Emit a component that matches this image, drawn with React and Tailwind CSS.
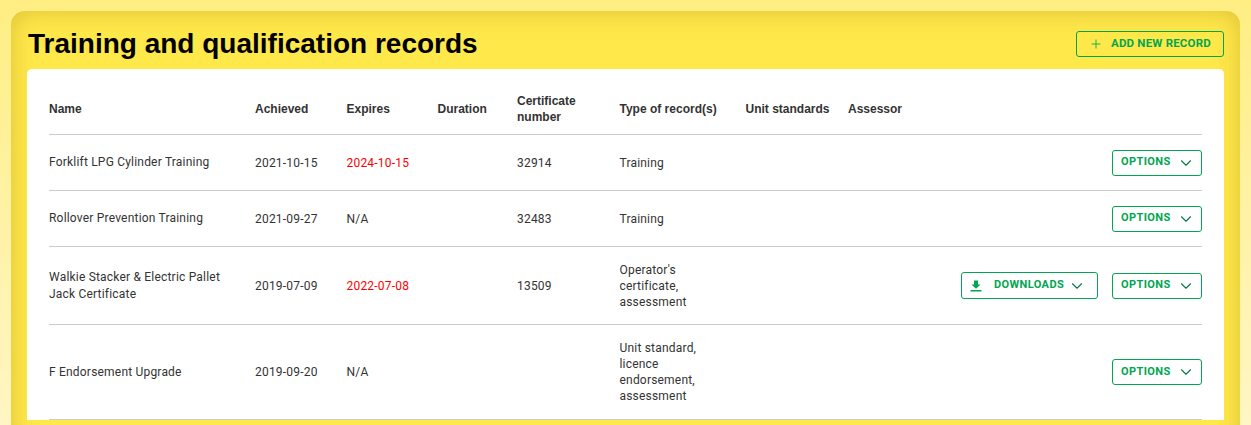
import React from 'react';
import { ChevronDown, Plus } from 'lucide-react';

const records = [
  { name: 'Forklift LPG Cylinder Training', achieved: '2021-10-15', expires: '2024-10-15', expired: true, cert: '32914', type: 'Training', height: 'h-14' },
  { name: 'Rollover Prevention Training', achieved: '2021-09-27', expires: 'N/A', cert: '32483', type: 'Training', height: 'h-14' },
  { name: 'Walkie Stacker & Electric Pallet Jack Certificate', achieved: '2019-07-09', expires: '2022-07-08', expired: true, cert: '13509', type: "Operator's certificate, assessment", downloads: true, height: 'h-[78px]' },
  { name: 'F Endorsement Upgrade', achieved: '2019-09-20', expires: 'N/A', cert: '', type: 'Unit standard, licence endorsement, assessment', height: 'h-[95px]' },
];

const DownloadIcon = () => (
  <svg width="12" height="12" viewBox="0 0 12 12" fill="#00a651">
    <path d="M4 0.5h4v4h2.5L6 8.8 1.5 4.5H4z" />
    <rect x="0.5" y="10" width="11" height="1.5" />
  </svg>
);

const Row = ({ record }) => (
  <div className={`flex items-center border-b border-[#cccccc] ${record.height}`}>
    <div className="w-[206px] pr-4 leading-[17px]">{record.name}</div>
    <div className="w-[91.5px]">{record.achieved}</div>
    <div className={`w-[91px] ${record.expired ? 'text-[#ff0000]' : ''}`}>{record.expires}</div>
    <div className="w-[79.5px]"></div>
    <div className="w-[102.5px]">{record.cert}</div>
    <div className="w-[126px] pr-[36px] leading-4">{record.type}</div>
    <div className="flex flex-1 items-center justify-end gap-3.5">
      {record.downloads && (
        <button className="flex h-[27px] w-[137px] items-center rounded-[3px] border border-[#00a651] pl-2 text-[11px] font-bold tracking-[0.4px] text-[#00a651]">
          <DownloadIcon />
          <span className="ml-3">DOWNLOADS</span>
          <ChevronDown size={18} strokeWidth={1.5} className="ml-1 text-[#0a7a45]" />
        </button>
      )}
      <button className="flex h-[26px] w-[90px] items-center rounded-[3px] border border-[#00a651] pl-2 text-[11px] font-bold tracking-[0.4px] text-[#00a651]">
        OPTIONS
        <ChevronDown size={18} strokeWidth={1.5} className="ml-1.5 text-[#0a7a45]" />
      </button>
    </div>
  </div>
);

export default function App() {
  return (
    <div className="h-[425px] overflow-hidden bg-gradient-to-b from-[#ffee82] to-[#fff6c4] px-[11px] pt-[11px]">
      <div className="h-[600px] rounded-t-[14px] bg-[#ffe84a] px-4 shadow-[inset_0_0_24px_rgba(190,160,40,0.55)]">
        <div className="flex h-[58px] items-center justify-between pt-[8px]">
          <h1 className="pl-px font-['Liberation_Sans',sans-serif] text-[28px] font-bold leading-none text-black">
            Training and qualification records
          </h1>
          <button className="flex h-[26px] w-[148px] items-center rounded-[3px] border border-[#00a651] pl-3 font-['Roboto',sans-serif] text-[11.5px] font-bold tracking-[0.2px] text-[#00a651]">
            <Plus size={14} strokeWidth={1.5} />
            <span className="ml-2">ADD NEW RECORD</span>
          </button>
        </div>
        <div className="rounded-t-[5px] bg-white px-[22px] pt-[15px] font-['Roboto',sans-serif] text-xs tracking-[0.2px] text-[#333333]">
          <div className="flex h-[51px] items-center border-b border-[#cccccc] font-['Liberation_Sans',sans-serif] font-bold leading-4 tracking-normal">
            <div className="w-[206px]">Name</div>
            <div className="w-[91.5px]">Achieved</div>
            <div className="w-[91px]">Expires</div>
            <div className="w-[79.5px]">Duration</div>
            <div className="w-[102.5px]">Certificate<br />number</div>
            <div className="w-[126px]">Type of record(s)</div>
            <div className="w-[102.5px]">Unit standards</div>
            <div>Assessor</div>
          </div>
          {records.map(record => (
            <Row key={record.name} record={record} />
          ))}
        </div>
      </div>
    </div>
  );
}
